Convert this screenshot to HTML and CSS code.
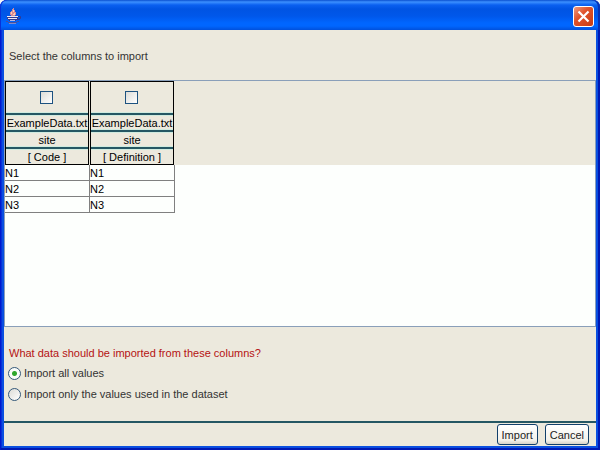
FILE: index.html
```html
<!DOCTYPE html>
<html lang="en">
<head>
<meta charset="utf-8">
<title>Import columns</title>
<link rel="stylesheet" href="styles.css">
</head>
<body>
<div class="window">
  <header class="titlebar">
    <svg class="logo" width="16" height="16" viewBox="0 0 16 16" aria-hidden="true">
      <path d="M7 0h1v2h1v2h1v3H9v1H5V7H4V4h1V3h1V1h1z" fill="#d88c94"/>
      <path d="M7 2h1v2H6v2H5V4h2zM8 5h1v2H7V6h1z" fill="#fcd0b8"/>
      <path d="M1 8h11v3h-1v1h-1v1H3v-1H2v-1H1z" fill="#343a90"/>
      <path d="M1 8h11v1H1zM2 10h9v1H2z" fill="#f0eaf4"/>
      <path d="M4 12h5v1H4z" fill="#b4b8e4"/>
      <path d="M12 8.500h2.500v2h-1v1H11" fill="none" stroke="#343a90" stroke-width="1"/>
      <path d="M0 13h2v1h9v-1h2v1h-2v1H2v-1H0z" fill="#48509c"/>
      <path d="M3 15h7v1H3z" fill="#7c88cc"/>
    </svg>
    <button class="close" type="button" aria-label="Close">
      <svg width="13" height="13" viewBox="0 0 13 13" aria-hidden="true"><path d="M1.500 1.500l10 10M11.500 1.500l-10 10" stroke="#fff" stroke-width="2.200"/></svg>
    </button>
  </header>
  <main class="content">
    <p class="intro">Select the columns to import</p>
    <div class="pane">
      <div class="shade">
      <table class="columns">
        <thead>
          <tr>
            <th scope="col"><div class="head">
              <span class="pick"><input class="check" type="checkbox" id="col-code" aria-labelledby="name-code"></span>
              <span class="line">ExampleData.txt</span>
              <span class="line">site</span>
              <label class="line" id="name-code" for="col-code">[ Code ]</label>
            </div></th>
            <th scope="col"><div class="head">
              <span class="pick"><input class="check" type="checkbox" id="col-def" aria-labelledby="name-def"></span>
              <span class="line">ExampleData.txt</span>
              <span class="line">site</span>
              <label class="line" id="name-def" for="col-def">[ Definition ]</label>
            </div></th>
          </tr>
        </thead>
        <tbody>
          <tr><td>N1</td><td>N1</td></tr>
          <tr><td>N2</td><td>N2</td></tr>
          <tr><td>N3</td><td>N3</td></tr>
        </tbody>
      </table>
      </div>
    </div>
    <fieldset class="options">
      <legend class="question">What data should be imported from these columns?</legend>
      <label class="option"><input class="radio" type="radio" name="scope" checked>Import all values</label>
      <label class="option"><input class="radio" type="radio" name="scope">Import only the values used in the dataset</label>
    </fieldset>
    <footer class="actions">
      <button class="button" type="button">Import</button>
      <button class="button" type="button">Cancel</button>
    </footer>
  </main>
</div>
</body>
</html>
```
FILE: styles.css
```css
* {
  box-sizing: border-box;
}

body {
  margin: 0;
  background: #f4f6f8;
  color: #333;
  font: 11px/14px "Liberation Sans", Arial, sans-serif;
}

.window {
  display: flex;
  flex-direction: column;
  min-height: 100vh;
  padding: 0 4px 4px;
  border-radius: 7px 7px 0 0;
  background: #0a4fe0;
  box-shadow: inset 1px 0 #0019cf, inset -2px -2px #0019b4, inset 2px 0 #0831d9;
}

.titlebar {
  display: flex;
  align-items: center;
  justify-content: space-between;
  height: 30px;
  margin: 0 -4px;
  padding: 2px 6px 0;
  border-radius: 7px 7px 0 0;
  background: linear-gradient(#0a50d0 0, #3c90ff 2px, #0a60f0 5px, #0054e3 9px, #0057ea 16px, #0066ff 23px, #0066ff 26px, #0050dc 30px);
  box-shadow: inset 1px 0 #0831d9, inset -2px 0 #0831b4;
}

.close {
  display: flex;
  align-items: center;
  justify-content: center;
  width: 21px;
  height: 21px;
  padding: 0;
  border: 1px solid #fff;
  border-radius: 3px;
  background: linear-gradient(135deg, #ee9a80, #e0532c 40%, #c83c12);
}

.content {
  display: flex;
  flex: 1;
  flex-direction: column;
  background: #ece9dd;
}

.intro {
  margin: 0;
  padding: 19px 5px 17px;
}

.pane {
  flex: 1;
  border: 1px solid #8a9fb9;
  background: #fdfffd;
}

.shade {
  background: linear-gradient(#ece9dd, #ece9dd) 0 0 / 100% 84px no-repeat;
}

.columns {
  border-spacing: 0;
  table-layout: fixed;
  width: 170px;
  color: #000;
}

th {
  padding: 0 1px 0 0;
  font-weight: normal;
}

.head {
  border: 1px solid #000;
  background: #ece9dd;
}

.pick {
  display: flex;
  align-items: center;
  justify-content: center;
  height: 31px;
  padding-right: 2px;
}

.line {
  display: block;
  height: 17px;
  padding-top: 1px;
  border-top: 2px solid #255763;
  box-shadow: inset 0 1px #d0ebdf, 0 -1px #d0ebdf;
  white-space: nowrap;
}

td {
  height: 16px;
  padding: 1px 0 0;
  border: solid #808080;
  border-width: 0 1px 1px 0;
}

.check,
.radio {
  appearance: none;
  flex: none;
  width: 13px;
  height: 13px;
  margin: 0;
  border: 1px solid #1d5280;
  background: linear-gradient(135deg, #dcdcd7, #fff);
}

.radio {
  border-color: #35597a;
  border-radius: 50%;
}

.radio:checked {
  background: radial-gradient(circle, #2fa82c 0 2px, #fbfdfa 3px);
}

.options {
  display: flex;
  flex-direction: column;
  gap: 7px;
  margin: 0;
  padding: 6px 4px 20px;
  border: 0;
}

.question {
  padding: 19px 1px 0;
  color: #b51212;
}

.option {
  display: flex;
  align-items: center;
  gap: 3px;
}

.actions {
  display: flex;
  justify-content: flex-end;
  gap: 7px;
  padding: 1px 7px 1px 0;
  border-top: 2px solid #255763;
}

.button {
  height: 21px;
  padding: 0 4px;
  border: 1px solid #12406b;
  border-radius: 3px;
  background: linear-gradient(#fff, #f3f1ea 80%, #d9d3c8);
  color: #222;
  font: inherit;
}
```
